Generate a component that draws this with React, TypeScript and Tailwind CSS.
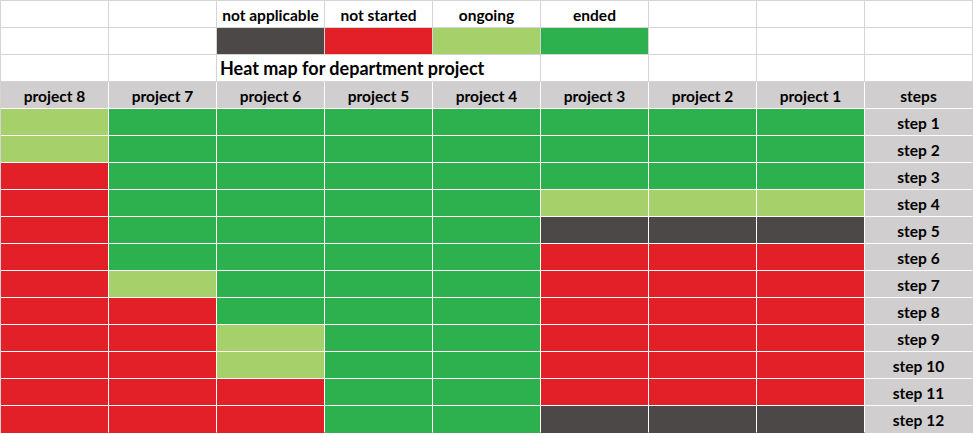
import React from "react";

type C = "N" | "R" | "L" | "G";

const fill: Record<C, string> = {
  N: "bg-[#4d4848]",
  R: "bg-[#e32027]",
  L: "bg-[#a6d06a]",
  G: "bg-[#2db14f]",
};

const rows: C[][] = [
  ["L", "G", "G", "G", "G", "G", "G", "G"],
  ["L", "G", "G", "G", "G", "G", "G", "G"],
  ["R", "G", "G", "G", "G", "G", "G", "G"],
  ["R", "G", "G", "G", "G", "L", "L", "L"],
  ["R", "G", "G", "G", "G", "N", "N", "N"],
  ["R", "G", "G", "G", "G", "R", "R", "R"],
  ["R", "L", "G", "G", "G", "R", "R", "R"],
  ["R", "R", "G", "G", "G", "R", "R", "R"],
  ["R", "R", "L", "G", "G", "R", "R", "R"],
  ["R", "R", "L", "G", "G", "R", "R", "R"],
  ["R", "R", "R", "G", "G", "R", "R", "R"],
  ["R", "R", "R", "G", "G", "N", "N", "N"],
];

const projects = ["project 8", "project 7", "project 6", "project 5", "project 4", "project 3", "project 2", "project 1"];

const white = "bg-white border-r border-b border-[#d4d4d4]";
const txt = "flex items-center justify-center pt-[3px] text-[15.5px] font-bold text-black leading-none";

export default function App() {
  const cells: React.ReactNode[] = [];
  const legend = ["not applicable", "not started", "ongoing", "ended"];
  for (let c = 0; c < 9; c++) {
    const label = c >= 2 && c <= 5 ? legend[c - 2] : "";
    cells.push(
      <div key={`r0-${c}`} className={`${white} ${txt}`}>
        {label}
      </div>
    );
  }
  const legendFill = [fill.N, fill.R, fill.L, fill.G];
  for (let c = 0; c < 9; c++) {
    if (c >= 2 && c <= 5) {
      cells.push(<div key={`r1-${c}`} className={`${legendFill[c - 2]} border-r border-b border-[#d4d4d4]`} />);
    } else {
      cells.push(<div key={`r1-${c}`} className={white} />);
    }
  }
  cells.push(<div key="r2-0" className={white} />);
  cells.push(<div key="r2-1" className={white} />);
  cells.push(
    <div
      key="r2-title"
      className="col-span-3 bg-white border-r border-b border-[#d4d4d4] flex items-end pl-[3px] pb-[4px] text-[18px] font-bold text-black leading-none whitespace-nowrap"
    >
      Heat map for department project
    </div>
  );
  for (let c = 5; c < 9; c++) cells.push(<div key={`r2-${c}`} className={white} />);
  projects.forEach((p) =>
    cells.push(
      <div key={p} className={`bg-[#d0cece] border-r border-b border-white ${txt}`}>
        {p}
      </div>
    )
  );
  cells.push(
    <div key="steps" className={`bg-[#d0cece] border-r border-b border-white border-r-[#d0cece] ${txt}`}>
      steps
    </div>
  );
  rows.forEach((r, i) => {
    const last = i === rows.length - 1;
    r.forEach((c, j) =>
      cells.push(
        <div
          key={`d${i}-${j}`}
          className={`${fill[c]} border-r border-b ${last ? "border-r-white border-b-transparent" : "border-white"}`}
        />
      )
    );
    cells.push(
      <div
        key={`s${i}`}
        className={`bg-[#d0cece] border-r border-b border-r-[#d0cece] ${last ? "border-b-[#d0cece]" : "border-b-white"} ${txt}`}
      >
        step {i + 1}
      </div>
    );
  });

  return (
    <div className="w-[973px] h-[433px] bg-white overflow-hidden" style={{ fontFamily: "Lato, 'Liberation Sans', sans-serif" }}>
      <div className="grid grid-cols-[repeat(9,108px)] grid-rows-[repeat(16,27px)] border-t border-l border-[#d4d4d4] w-[973px]">
        {cells}
      </div>
    </div>
  );
}
